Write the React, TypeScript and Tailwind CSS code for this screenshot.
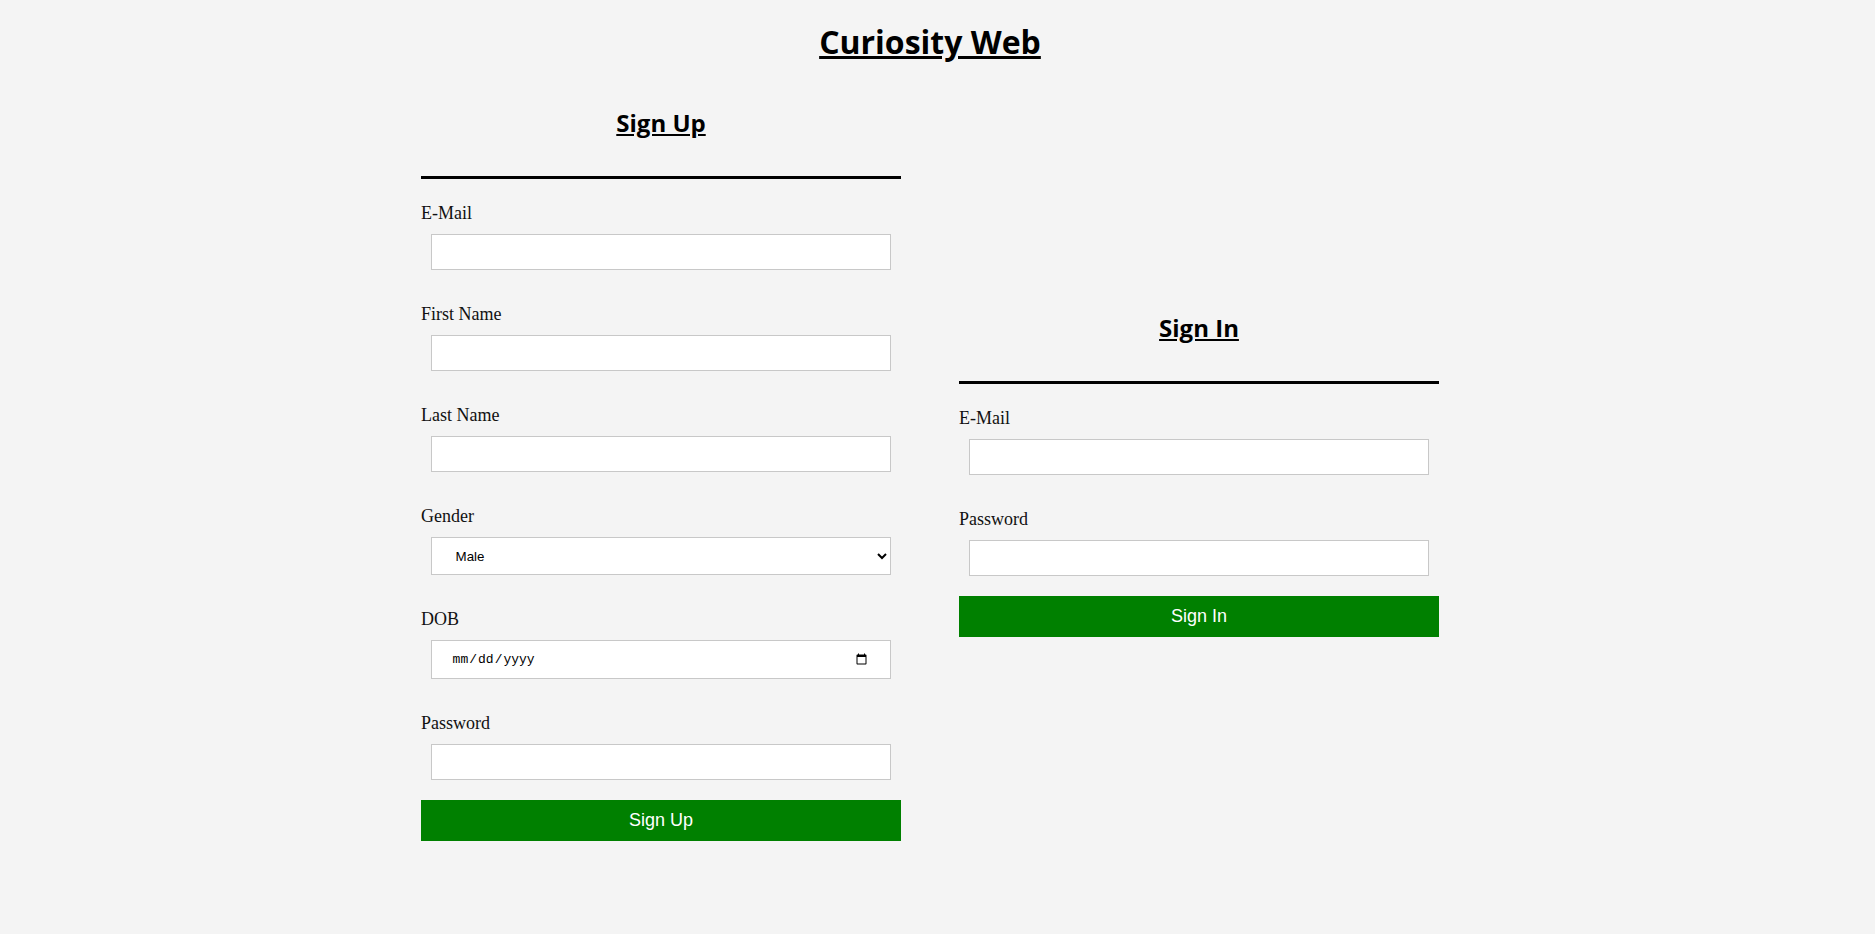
import { useState } from "react";

const heading = "font-['Comic_Sans_MS','Open_Sans',sans-serif] font-bold underline text-black";
const label = "block font-['Liberation_Serif',serif] text-[18px] leading-[20px] text-[#111]";
const field =
	"block mx-[2%] mt-[11px] w-[96%] border border-[#c8c8c8] bg-white px-5 text-black outline-none";

function Field({ name, type = "text", last = false }: { name: string; type?: string; last?: boolean }) {
	return (
		<div>
			<label className={label}>{name}</label>
			<input type={type} className={`${field} h-[36px] ${last ? "mb-[20px]" : "mb-[34px]"}`} />
		</div>
	);
}

function SubmitButton({ text }: { text: string }) {
	return (
		<button
			type="button"
			className="block h-[41px] w-full bg-[#008000] font-['Liberation_Sans',Arial,sans-serif] text-[18px] text-white"
		>
			{text}
		</button>
	);
}

export default function App() {
	const [gender, setGender] = useState("Male");

	return (
		<div className="min-h-screen bg-[#f4f4f4] pr-[15px] pb-[40px]">
			<h1 className={`${heading} pt-[22px] text-center text-[32px] leading-[40px]`}>
				Curiosity Web
			</h1>

			<div className="mt-[45px] flex items-center justify-center gap-[58px]">
				{/* Sign Up */}
				<div className="w-[480px]">
					<h2 className={`${heading} text-center text-[24px] leading-[32px]`}>Sign Up</h2>
					<div className="mt-[37px] mb-[24px] h-[3px] bg-black" />

					<Field name="E-Mail" type="email" />
					<Field name="First Name" />
					<Field name="Last Name" />

					<div>
						<label className={label}>Gender</label>
						<select
							value={gender}
							onChange={(e) => setGender(e.target.value)}
							className={`${field} mb-[34px] h-[38px] font-['Liberation_Sans',Arial,sans-serif] text-[13.33px]`}
						>
							<option>Male</option>
							<option>Female</option>
							<option>Other</option>
						</select>
					</div>

					<div>
						<label className={label}>DOB</label>
						<input
							type="date"
							className={`${field} mb-[34px] h-[39px] font-['Liberation_Mono',monospace] text-[13px]`}
						/>
					</div>

					<Field name="Password" type="password" last />
					<SubmitButton text="Sign Up" />
				</div>

				{/* Sign In */}
				<div className="w-[480px]">
					<h2 className={`${heading} text-center text-[24px] leading-[32px]`}>Sign In</h2>
					<div className="mt-[37px] mb-[24px] h-[3px] bg-black" />

					<Field name="E-Mail" type="email" />
					<Field name="Password" type="password" last />
					<SubmitButton text="Sign In" />
				</div>
			</div>
		</div>
	);
}
